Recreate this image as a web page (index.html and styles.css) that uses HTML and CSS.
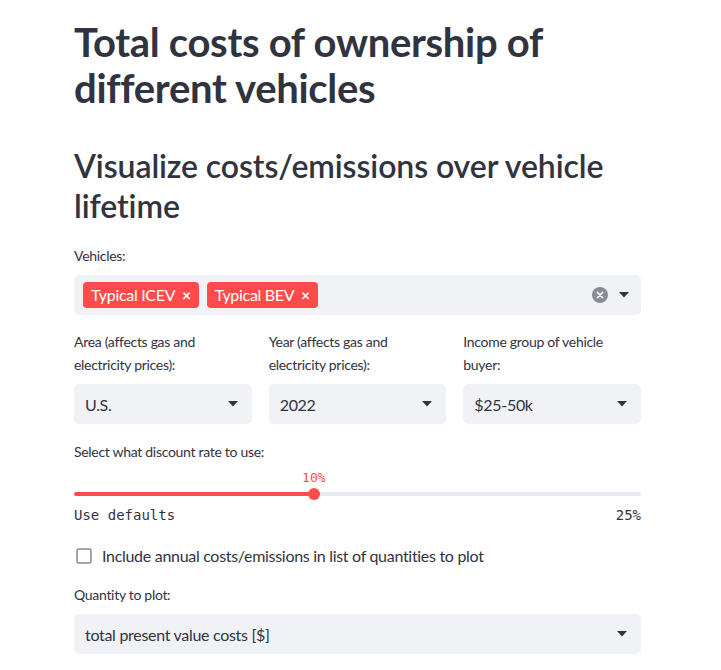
FILE: index.html
```html
<!DOCTYPE html>
<html lang="en">
<head>
<meta charset="utf-8">
<title>Total costs of ownership</title>
<link rel="stylesheet" href="styles.css">
</head>
<body>
<main class="page">
  <h1 class="title">Total costs of ownership of different vehicles</h1>
  <h2 class="subtitle">Visualize costs/emissions over vehicle lifetime</h2>

  <div class="field">
    <label class="label">Vehicles:</label>
    <div class="multiselect">
      <div class="tags">
        <span class="tag">Typical ICEV <span class="tag-x">×</span></span>
        <span class="tag">Typical BEV <span class="tag-x">×</span></span>
      </div>
      <div class="ms-icons">
        <svg class="clear" width="16" height="16" viewBox="0 0 16 16"><circle cx="8" cy="8" r="8" fill="#8a8c95"/><path d="M5.3 5.3 L10.7 10.7 M10.7 5.3 L5.3 10.7" stroke="#f0f2f6" stroke-width="1.8" stroke-linecap="round"/></svg>
        <svg class="caret" width="10" height="6" viewBox="0 0 10 6"><path d="M0 0 H10 L5 5.5 Z" fill="#31333f"/></svg>
      </div>
    </div>
  </div>

  <div class="columns">
    <div class="col">
      <label class="label">Area (affects gas and electricity prices):</label>
      <div class="select"><span>U.S.</span><svg class="caret" width="10" height="6" viewBox="0 0 10 6"><path d="M0 0 H10 L5 5.5 Z" fill="#31333f"/></svg></div>
    </div>
    <div class="col">
      <label class="label">Year (affects gas and electricity prices):</label>
      <div class="select"><span>2022</span><svg class="caret" width="10" height="6" viewBox="0 0 10 6"><path d="M0 0 H10 L5 5.5 Z" fill="#31333f"/></svg></div>
    </div>
    <div class="col">
      <label class="label">Income group of vehicle buyer:</label>
      <div class="select"><span>$25-50k</span><svg class="caret" width="10" height="6" viewBox="0 0 10 6"><path d="M0 0 H10 L5 5.5 Z" fill="#31333f"/></svg></div>
    </div>
  </div>

  <div class="field slider-field">
    <label class="label">Select what discount rate to use:</label>
    <div class="slider">
      <div class="track">
        <div class="fill" style="width: 42.3%"></div>
        <div class="thumb" style="left: 42.3%"><span class="thumb-value">10%</span></div>
      </div>
    </div>
    <div class="ticks"><span>Use defaults</span><span>25%</span></div>
  </div>

  <div class="checkbox-row">
    <span class="box"></span>
    <span class="check-text">Include annual costs/emissions in list of quantities to plot</span>
  </div>

  <div class="field quantity-field">
    <label class="label">Quantity to plot:</label>
    <div class="select"><span>total present value costs [$]</span><svg class="caret" width="10" height="6" viewBox="0 0 10 6"><path d="M0 0 H10 L5 5.5 Z" fill="#31333f"/></svg></div>
  </div>
</main>
</body>
</html>
```

FILE: styles.css
```css
* { box-sizing: border-box; }
html, body { margin: 0; padding: 0; background: #ffffff; }
body {
  font-family: Lato, "Noto Sans", sans-serif;
  color: #31333f;
  letter-spacing: -0.3px;
}
.page {
  width: 567px;
  margin-left: 74px;
  padding-top: 19px;
}
.title {
  font-size: 40px;
  line-height: 46px;
  font-weight: 700;
  margin: 0;
  letter-spacing: -0.3px;
}
.subtitle {
  font-size: 32px;
  line-height: 40px;
  font-weight: 600;
  margin: 35px 0 0 0;
  letter-spacing: -0.1px;
}
.field { margin-top: 18px; }
.label {
  display: block;
  font-size: 14px;
  line-height: 23px;
  margin-bottom: 8px;
}
.multiselect {
  height: 40px;
  background: #f0f2f6;
  border-radius: 5px;
  display: flex;
  align-items: center;
  justify-content: space-between;
  padding: 0 12px 0 9px;
}
.tags { display: flex; gap: 8px; }
.tag {
  background: #ff4b4b;
  color: #ffffff;
  font-size: 16px;
  height: 26px;
  line-height: 26px;
  padding: 0 8px 0 8px;
  border-radius: 4px;
  display: inline-flex;
  align-items: center;
}
.tag-x { font-size: 15px; margin-left: 7px; font-weight: 700; }
.ms-icons { display: flex; align-items: center; gap: 12px; }
.clear { margin-right: -1px; }
.columns {
  display: grid;
  grid-template-columns: 1fr 1fr 1fr;
  column-gap: 17px;
  margin-top: 15px;
}
.select {
  height: 40px;
  background: #f0f2f6;
  border-radius: 5px;
  display: flex;
  align-items: center;
  justify-content: space-between;
  padding: 0 14px 0 11px;
  font-size: 16px;
}
.slider-field { margin-top: 16px; }
.slider { padding: 21px 0 0 0; }
.track {
  position: relative;
  height: 4px;
  background: #e6e9ef;
  border-radius: 2px;
}
.fill {
  height: 4px;
  background: #ff4b4b;
  border-radius: 2px;
}
.thumb {
  position: absolute;
  top: -4px;
  width: 12px;
  height: 12px;
  margin-left: -6px;
  border-radius: 50%;
  background: #ff4b4b;
}
.thumb-value {
  position: absolute;
  bottom: 15px;
  left: 50%;
  transform: translateX(-50%);
  font-family: "DejaVu Sans Mono", "Liberation Mono", monospace;
  font-size: 13px;
  letter-spacing: 0;
  color: #ff4b4b;
}
.ticks {
  display: flex;
  justify-content: space-between;
  font-family: "DejaVu Sans Mono", "Liberation Mono", monospace;
  font-size: 14px;
  letter-spacing: 0;
  margin-top: 11px;
}
.checkbox-row {
  display: flex;
  align-items: center;
  margin-top: 21px;
}
.box {
  width: 16px;
  height: 16px;
  border: 2px solid #a3a5ad;
  border-radius: 3px;
  margin-left: 2px;
  margin-right: 10px;
}
.check-text { font-size: 16px; line-height: 24px; }
.quantity-field { margin-top: 15px; }
```
